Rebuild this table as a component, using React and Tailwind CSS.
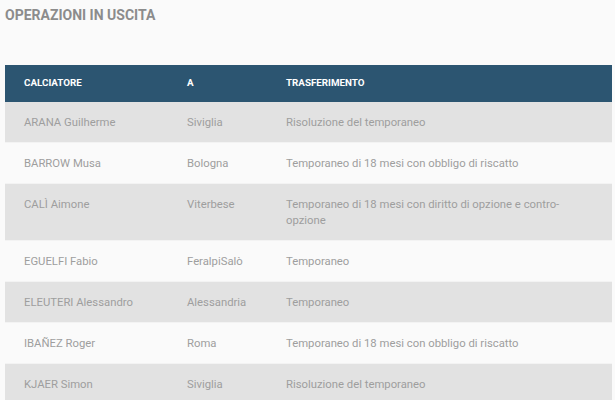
import React from "react";

const rows = [
  ["ARANA Guilherme", "Siviglia", "Risoluzione del temporaneo"],
  ["BARROW Musa", "Bologna", "Temporaneo di 18 mesi con obbligo di riscatto"],
  ["CALÌ Aimone", "Viterbese", "Temporaneo di 18 mesi con diritto di opzione e contro-opzione"],
  ["EGUELFI Fabio", "FeralpiSalò", "Temporaneo"],
  ["ELEUTERI Alessandro", "Alessandria", "Temporaneo"],
  ["IBAÑEZ Roger", "Roma", "Temporaneo di 18 mesi con obbligo di riscatto"],
  ["KJAER Simon", "Siviglia", "Risoluzione del temporaneo"],
];

export default function App() {
  return (
    <div
      className="w-[615px] h-[400px] overflow-hidden bg-[#fafafa]"
      style={{ fontFamily: 'Roboto, sans-serif' }}
    >
      <h2 className="pl-[5px] pt-[8px] text-[14px] leading-[15px] font-bold text-[#8c8c8c]">
        OPERAZIONI IN USCITA
      </h2>
      <div className="ml-[5px] mr-[3px] mt-[42px]">
        <div className="flex h-[37px] items-center bg-[#2c5571] text-white text-[9.8px] font-bold uppercase">
          <div className="w-[182px] pl-[19px]">Calciatore</div>
          <div className="w-[99px]">A</div>
          <div className="flex-1">Trasferimento</div>
        </div>
        {rows.map((r, i) => (
          <div
            key={i}
            className={
              "flex pt-[13px] pb-[11px] text-[11.3px] leading-4 text-[#9e9e9e] border-b border-[#f3f3f3] " +
              (i % 2 === 0 ? "bg-[#e2e2e2]" : "bg-[#fafafa]")
            }
          >
            <div className="w-[182px] pl-[19px]">{r[0]}</div>
            <div className="w-[99px]">{r[1]}</div>
            <div className="flex-1 pr-[36px]">{r[2]}</div>
          </div>
        ))}
      </div>
    </div>
  );
}
